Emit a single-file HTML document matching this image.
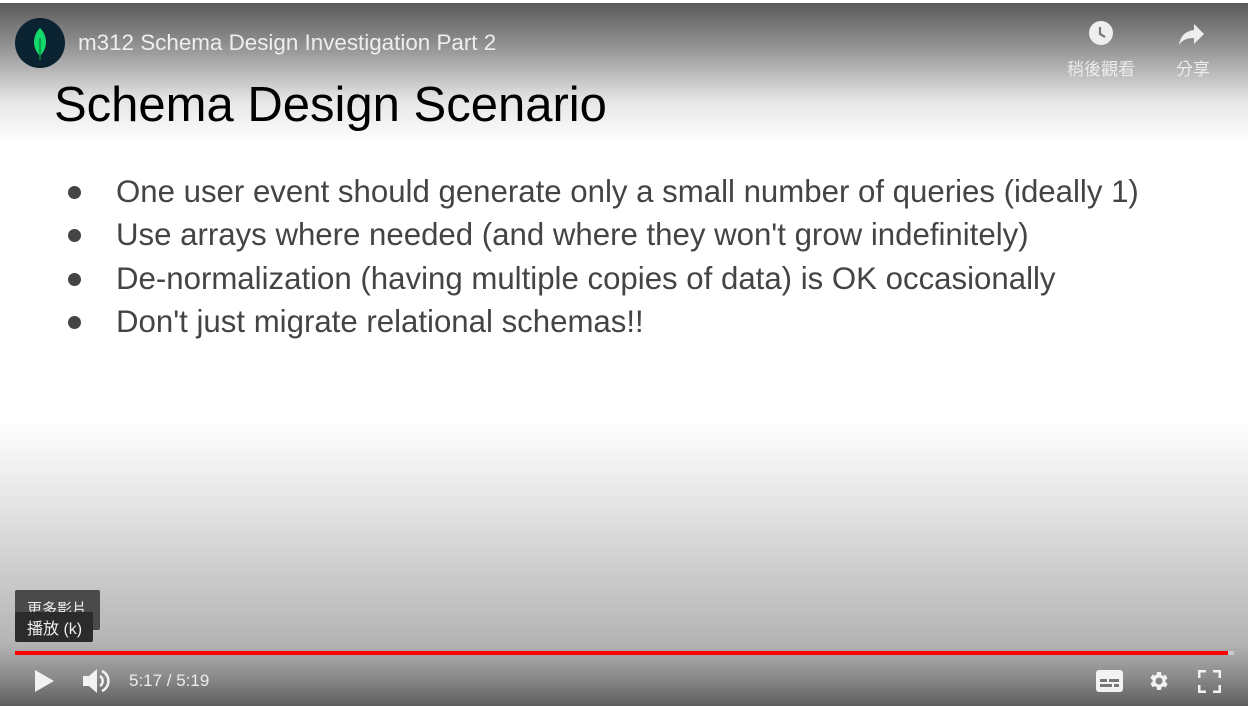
<!DOCTYPE html>
<html><head><meta charset="utf-8"><style>
*{margin:0;padding:0;box-sizing:border-box}
body{width:1248px;height:706px;overflow:hidden;background:#fff;position:relative;font-family:"Liberation Sans","Noto Sans CJK TC",sans-serif}
.topg{position:absolute;left:0;top:3px;width:1248px;height:140px;background:linear-gradient(#5a5a5a 0%,#9a9a9a 35%,#e6e6e6 70%,#fff 100%)}
.botg{position:absolute;left:0;top:420px;width:1248px;height:286px;background:linear-gradient(#fff 0%,#e4e4e4 30%,#c6c6c6 60%,#b4b4b4 78%,#8a8a8a 90%,#5e5e5e 100%)}
.t{position:absolute;white-space:nowrap}
h1{position:absolute;left:54px;top:77px;font-weight:normal;font-size:49px;color:#000}
ul{position:absolute;left:68px;top:172px;list-style:none}
li{font-size:31.2px;color:#444;height:43.3px;line-height:40px;position:relative;padding-left:48px;white-space:nowrap}
li:before{content:"";position:absolute;left:0;top:14px;width:13px;height:13px;border-radius:50%;background:#444}
</style></head><body>
<div class="topg"></div>
<div class="botg"></div>
<svg class="t" style="left:15px;top:18px" width="50" height="50"><circle cx="25" cy="25" r="25" fill="#0b2230"/><path d="M25 10 C33 18 33 30 25 38 C17 30 17 18 25 10Z" fill="#13d86a"/><line x1="25" y1="20" x2="25" y2="42" stroke="#0a8a40" stroke-width="1.5"/></svg>
<div class="t" style="left:78px;top:30px;font-size:22.4px;color:#eee">m312 Schema Design Investigation Part 2</div>
<svg class="t" style="left:1088px;top:20px" width="26" height="26"><circle cx="13" cy="13" r="12" fill="#eee"/><path d="M12 7v7l5 3" stroke="#777" stroke-width="2.2" fill="none"/></svg>
<div class="t" style="left:1067px;top:55px;font-size:17px;color:#ececec">稍後觀看</div>
<svg class="t" style="left:1178px;top:22px" width="28" height="24"><path d="M16 2l10 10-10 10v-6C9 16 4 18 1 23 2 15 7 9 16 8z" fill="#eee"/></svg>
<div class="t" style="left:1176px;top:55px;font-size:17px;color:#ececec">分享</div>
<h1>Schema Design Scenario</h1>
<ul>
<li>One user event should generate only a small number of queries (ideally 1)</li>
<li>Use arrays where needed (and where they won't grow indefinitely)</li>
<li>De-normalization (having multiple copies of data) is OK occasionally</li>
<li>Don't just migrate relational schemas!!</li>
</ul>
<div class="t" style="left:15px;top:590px;width:85px;height:40px;background:#4a4a4a;border-radius:2px;color:#eee;font-size:15px;padding:8px 0 0 12px;overflow:hidden">更多影片</div>
<div class="t" style="left:15px;top:612px;width:78px;height:30px;background:#2b2b2b;border-radius:2px;color:#eee;font-size:16px;padding:3px 0 0 12px">播放 (k)</div>
<div class="t" style="left:15px;top:651px;width:1213px;height:4px;background:#f00"></div>
<div class="t" style="left:1228px;top:651px;width:6px;height:4px;background:#ccc"></div>
<svg class="t" style="left:34px;top:669px" width="22" height="24"><path d="M1 1L20 12 1 23Z" fill="#f2f2f2"/></svg>
<svg class="t" style="left:82px;top:668px" width="30" height="26"><path d="M1 8h6l8-7v24l-8-7H1z" fill="#f2f2f2"/><path d="M18 8a6 6 0 0 1 0 10" stroke="#f2f2f2" stroke-width="2.5" fill="none"/><path d="M20 3a11 11 0 0 1 0 20" stroke="#f2f2f2" stroke-width="2.5" fill="none"/></svg>
<div class="t" style="left:129px;top:671px;font-size:17px;color:#ececec">5:17 / 5:19</div>
<svg class="t" style="left:1096px;top:670px" width="27" height="22"><rect x="0" y="0" width="27" height="22" rx="3" fill="#f2f2f2"/><rect x="4" y="9" width="7" height="3" fill="#777"/><rect x="13" y="9" width="10" height="3" fill="#777"/><rect x="4" y="14" width="12" height="3" fill="#777"/><rect x="18" y="14" width="5" height="3" fill="#777"/></svg>
<svg class="t" style="left:1147px;top:669px" width="24" height="24" viewBox="0 0 24 24"><path d="M19.4 13a7.5 7.5 0 0 0 0-2l2.1-1.6-2-3.5-2.5 1a7 7 0 0 0-1.7-1L15 3h-4l-.4 2.6a7 7 0 0 0-1.7 1l-2.5-1-2 3.5L6.6 11a7.5 7.5 0 0 0 0 2l-2.1 1.6 2 3.5 2.5-1a7 7 0 0 0 1.7 1L11 21h4l.4-2.6a7 7 0 0 0 1.7-1l2.5 1 2-3.5zM13 15.5a3.5 3.5 0 1 1 0-7 3.5 3.5 0 0 1 0 7z" fill="#f2f2f2" transform="translate(-1 0)"/></svg>
<svg class="t" style="left:1198px;top:670px" width="23" height="23"><path d="M1 8V1h7M15 1h7v7M22 15v7h-7M8 22H1v-7" stroke="#f2f2f2" stroke-width="3" fill="none"/></svg>
</body></html>
